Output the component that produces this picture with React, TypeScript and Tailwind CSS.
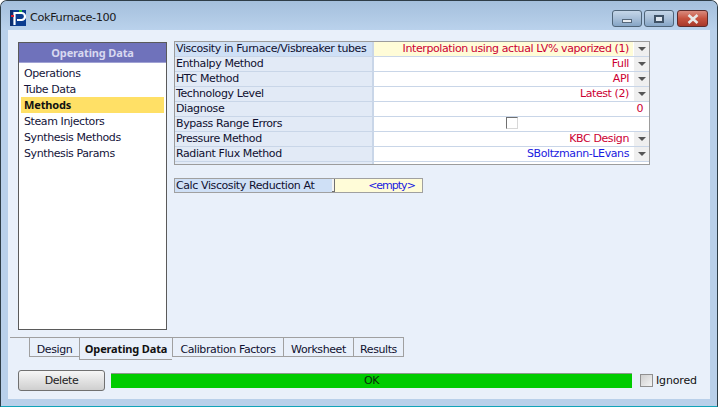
import React from 'react';

const rows = [
  { label: 'Viscosity in Furnace/Visbreaker tubes', value: 'Interpolation using actual LV% vaporized (1)', color: 'text-[#cc0033]', drop: true, active: true },
  { label: 'Enthalpy Method', value: 'Full', color: 'text-[#cc0033]', drop: true },
  { label: 'HTC Method', value: 'API', color: 'text-[#cc0033]', drop: true },
  { label: 'Technology Level', value: 'Latest (2)', color: 'text-[#cc0033]', drop: true },
  { label: 'Diagnose', value: '0', color: 'text-[#cc0033]' },
  { label: 'Bypass Range Errors', check: true },
  { label: 'Pressure Method', value: 'KBC Design', color: 'text-[#cc0033]', drop: true },
  { label: 'Radiant Flux Method', value: 'SBoltzmann-LEvans', color: 'text-[#1a1ae0]', drop: true },
];

const navItems = ['Operations', 'Tube Data', 'Methods', 'Steam Injectors', 'Synthesis Methods', 'Synthesis Params'];

const boldFont = "font-['Noto_Sans',sans-serif] font-bold tracking-[-0.15px]";

const tabs = [
  { name: 'Design', cls: 'w-[50px] h-[20px] pt-[5px] border-l' },
  { name: 'Operating Data', cls: `w-[93px] h-[23px] pt-[1px] border-l ${boldFont} text-[#111]` },
  { name: 'Calibration Factors', cls: 'w-[111px] h-[20px] pt-[5px] border-l' },
  { name: 'Worksheet', cls: 'w-[70px] h-[20px] pt-[5px] border-l' },
  { name: 'Results', cls: 'w-[51px] h-[20px] pt-[5px] border-l border-r' },
];

const CaptionButton = ({ cls, children }: { cls: string; children: React.ReactNode }) => (
  <div className={`h-[17px] flex items-center justify-center rounded-[3px] border border-[#4f6478] ${cls}`}>{children}</div>
);

export default function App() {
  return (
    <div className="w-[718px] h-[407px] bg-[#b9d0ea] rounded-t-[7px] border border-[#2e3d47] border-b-[#13a3b8] flex flex-col overflow-hidden text-[11px] leading-[14px] text-[#101030] font-['DejaVu_Sans',sans-serif] tracking-[-0.4px]">
      {/* Title bar */}
      <div className="h-[29px] shrink-0 bg-gradient-to-b from-[#a4bfdc] to-[#bad2ec] flex pl-[9px] pr-[9px] pt-[9px]">
        <div className="w-[16px] h-[16px]">
          <svg width="16" height="16" viewBox="0 0 16 16">
            <rect width="16" height="16" fill="#0b3c8f" />
            <rect width="3" height="16" fill="#0c2f70" />
            <path d="M4.5 15V3h7a3 3 0 0 1 0 7H7" fill="none" stroke="#fff" strokeWidth="2.2" />
            <rect x="1" y="5" width="3" height="2" fill="#e02030" />
            <rect x="9" y="0" width="3" height="2" fill="#30c040" />
          </svg>
        </div>
        <span className="ml-[4px] mt-[1px] text-[11.3px] text-[#1a1a1a]">CokFurnace-100</span>
        <div className="ml-auto flex h-[17px]">
          <CaptionButton cls="w-[30px] bg-gradient-to-b from-[#c5d6e8] via-[#a8bfd8] to-[#86a5c6]">
            <div className="w-[10px] h-[4px] mt-[4px] bg-[#e9edf2] border border-[#55677a]" />
          </CaptionButton>
          <CaptionButton cls="w-[30px] ml-[2px] bg-gradient-to-b from-[#c5d6e8] via-[#a8bfd8] to-[#86a5c6]">
            <div className="w-[10px] h-[8px] border-2 border-[#3f5266] bg-[#dfe7f0]" />
          </CaptionButton>
          <CaptionButton cls="w-[31px] ml-[3px] border-[#5c2b2b] bg-gradient-to-b from-[#d98a7e] via-[#c6523f] to-[#a8382a]">
            <svg width="14" height="10" viewBox="0 0 14 10">
              <path d="M2.5 1l9 8M11.5 1l-9 8" stroke="#e8e8e8" strokeWidth="2.6" />
            </svg>
          </CaptionButton>
        </div>
      </div>

      {/* Client area */}
      <div className="mx-[7px] mb-[7px] flex-1 bg-[#e9f0fa] flex flex-col min-h-0">
        <div className="flex h-[307px] shrink-0 pt-[11px] pl-[10px]">
          {/* Side list */}
          <div className="w-[149px] h-[288px] mt-[1px] bg-white border border-[#5a5a5a]">
            <div className={`h-[20px] pt-[1px] bg-[#6f72bb] border-b border-[#a0a2d4] flex items-center justify-center text-[#d7d8f0] ${boldFont}`}>Operating Data</div>
            <div className="pt-[2px] px-[2px]">
              {navItems.map((item) => (
                <div key={item} className={`h-[16px] pl-[3px] text-[#14143a] ${item === 'Methods' ? `leading-[16px] bg-[#ffe066] !text-[#111] ${boldFont}` : 'leading-[17px]'}`}>{item}</div>
              ))}
            </div>
          </div>

          <div className="ml-[7px]">
            {/* Methods table */}
            <div className="w-[476px] border border-[#9c9c9c] bg-white">
              {rows.map((row) => (
                <div key={row.label} className="flex h-[15px] border-b border-[#c9d6e8]">
                  <div className={`w-[199px] shrink-0 pl-[1px] border-r-2 border-[#c9d6e8] whitespace-nowrap ${row.active ? 'bg-[#cfe0f6]' : 'bg-[#e2eaf6]'}`}>{row.label}</div>
                  <div className={`flex-1 min-w-0 flex justify-end pr-[4px] whitespace-nowrap ${row.color ?? ''} ${row.active ? 'bg-[#fffcd8]' : ''}`}>
                    {row.check ? (
                      <div className="mr-[127px] w-[12px] h-[12px] border border-[#707070] border-r-[#d8d8d8] border-b-[#d8d8d8] bg-white" />
                    ) : (
                      row.value
                    )}
                  </div>
                  {row.drop && (
                    <div className="w-[16px] shrink-0 bg-[#efefef] border-l border-white flex items-center justify-center">
                      <div className="w-0 h-0 border-x-[4px] border-x-transparent border-t-[4px] border-t-[#555]" />
                    </div>
                  )}
                  {row.value === '0' && <div className="w-[2px] shrink-0" />}
                </div>
              ))}
              <div className="flex h-[2px]"><div className="w-[199px] bg-[#e2eaf6] border-r-2 border-[#c9d6e8]" /></div>
            </div>

            {/* Calc field */}
            <div className="mt-[13px] w-[249px] h-[15px] flex border border-[#a0a0a0]">
              <div className="w-[157px] pl-[1px] bg-[#cfe0f6] whitespace-nowrap">Calc Viscosity Reduction At</div>
              <div className="w-[3px] bg-[#f4f4f4] border-r border-b border-[#707070]" />
              <div className="flex-1 bg-[#fffcd8] text-center text-[#1a1ae0] pl-[26px] tracking-[-1px]">&lt;empty&gt;</div>
            </div>
          </div>
        </div>

        {/* Tabs */}
        <div className="flex items-start pl-[2px] h-[33px] shrink-0">
          <div className="w-[19px] border-t border-[#a0a0a0]" />
          {tabs.map((tab) => (
            <div key={tab.name} className={`flex items-center justify-center border-t border-b border-[#a0a0a0] whitespace-nowrap ${tab.cls}`}>{tab.name}</div>
          ))}
        </div>

        {/* Status row */}
        <div className="flex items-start pl-[10px]">
          <button className="w-[87px] h-[21px] rounded-[3px] border border-[#707070] bg-gradient-to-b from-[#f6f6f6] to-[#cfcfcf] text-[#222]">Delete</button>
          <div className="ml-[6px] mt-[3px] w-[521px] h-[15px] bg-[#00cc00] border-t border-[#8a9a8a] flex items-center justify-center text-[#0a2a0a]">OK</div>
          <div className="ml-[8px] mt-[4px] w-[13px] h-[13px] border border-[#909090] bg-gradient-to-br from-[#cfcfcf] to-[#f4f4f4]" />
          <span className="ml-[3px] mt-[4px] text-[#111] tracking-[-0.15px]">Ignored</span>
        </div>
      </div>
    </div>
  );
}
